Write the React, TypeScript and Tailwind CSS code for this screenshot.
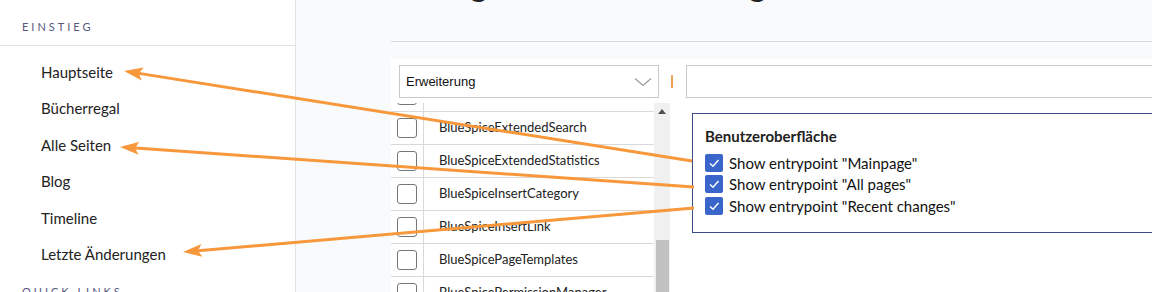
import React from 'react';

const navItems = ['Hauptseite', 'Bücherregal', 'Alle Seiten', 'Blog', 'Timeline', 'Letzte Änderungen'];

const rows = [
  'BlueSpiceExpiry',
  'BlueSpiceExtendedSearch',
  'BlueSpiceExtendedStatistics',
  'BlueSpiceInsertCategory',
  'BlueSpiceInsertLink',
  'BlueSpicePageTemplates',
  'BlueSpicePermissionManager',
];

const options = ['Show entrypoint "Mainpage"', 'Show entrypoint "All pages"', 'Show entrypoint "Recent changes"'];

// tail -> tip
const arrows = [
  { x1: 692, y1: 161, x2: 124, y2: 71 },
  { x1: 694, y1: 187, x2: 120, y2: 147 },
  { x1: 694, y1: 208, x2: 183, y2: 252 },
];

function Arrow({ x1, y1, x2, y2 }: { x1: number; y1: number; x2: number; y2: number }) {
  const dx = x2 - x1;
  const dy = y2 - y1;
  const len = Math.hypot(dx, dy);
  const ux = dx / len;
  const uy = dy / len;
  const head = 19;
  const half = 6.5;
  const bx = x2 - ux * head;
  const by = y2 - uy * head;
  const pts = `${x2},${y2} ${bx - uy * half},${by + ux * half} ${x2 - ux * (head - 4)},${y2 - uy * (head - 4)} ${bx + uy * half},${by - ux * half}`;
  return (
    <g>
      <line x1={x1} y1={y1} x2={x2 - ux * 12} y2={y2 - uy * 12} stroke="#f7983c" strokeWidth={3} />
      <polygon points={pts} fill="#f7983c" />
    </g>
  );
}

export default function App() {
  return (
    <div className="relative flex h-[292px] w-[1152px] overflow-hidden bg-white font-['Lato','Noto_Sans',sans-serif]">
      {/* sidebar */}
      <div className="w-[296px] shrink-0 border-r border-[#e3e3e3] bg-white">
        <div className="border-b border-[#e0e0e0] pb-[10px] pl-[22px] pt-[19px]">
          <div className="text-[11px] leading-[16px] tracking-[3px] text-[#56587e]">EINSTIEG</div>
        </div>
        <div className="mt-[8px] pl-[41px]">
          {navItems.map(n => (
            <div key={n} className="flex h-[36.4px] items-center text-[15px] text-[#222]">{n}</div>
          ))}
        </div>
        <div className="mt-[12px] pl-[22px] text-[11px] leading-[16px] tracking-[3px] text-[#56587e]">QUICK LINKS</div>
      </div>

      {/* main */}
      <div className="flex min-w-0 flex-1 flex-col bg-[#f9fafc] pl-[95px]">
        <div className="h-[42px] shrink-0 overflow-hidden border-b border-[#d9d9d9]">
          <h1 className="mt-[-37px] whitespace-nowrap text-[34px] font-normal leading-[40px] text-[#222]">Konfiguration Einstellungen</h1>
        </div>
        <div className="h-[17px] shrink-0" />
        <div className="flex min-h-0 flex-1 flex-col bg-white">
          <div className="flex items-center pt-[6px]">
            <div className="ml-[8px] flex h-[33px] w-[260px] items-center justify-between border border-[#c8c8c8] pl-[6px] pr-[6px] font-['Liberation_Sans',Arial,sans-serif] text-[13px] text-[#111]">
              <span>Erweiterung</span>
              <svg width="18" height="10" viewBox="0 0 18 10" fill="none" stroke="#9a9a9a" strokeWidth="1.2">
                <path d="M1 1.5 L9 8.5 L17 1.5" />
              </svg>
            </div>
            <div className="ml-[12px] h-[13px] w-[2px] bg-[#eea25a]" />
            <div className="ml-[13px] h-[33px] flex-1 border border-r-0 border-[#c8c8c8]" />
          </div>
          <div className="mt-[5px] flex min-h-0 flex-1">
            <div className="flex w-[279px] shrink-0 overflow-hidden">
              <div className="w-[263px] overflow-hidden">
                <div className="mt-[-25px]">
                  {rows.map(r => (
                    <div key={r} className="flex h-[33px] border-t border-[#d9d9d9]">
                      <div className="flex w-[33px] items-center border-r border-[#d9d9d9] pl-[6px]">
                        <div className="h-[20px] w-[20px] rounded-[3px] border border-[#777] bg-white" />
                      </div>
                      <div className="flex items-center pl-[15px] text-[13px] text-[#222]">{r}</div>
                    </div>
                  ))}
                </div>
              </div>
              <div className="w-[16px] bg-[#f0f0f0]">
                <div className="flex h-[17px] items-center justify-center">
                  <svg width="8" height="5" viewBox="0 0 8 5">
                    <path d="M0 5 L4 0 L8 5 Z" fill="#505050" />
                  </svg>
                </div>
                <div className="mx-auto mt-[120px] h-[80px] w-[13px] bg-[#c1c1c1]" />
              </div>
            </div>
            <div className="ml-[22px] mt-[10px] flex-1 self-start border border-r-0 border-[#3d4d8a] pb-[15px] pl-[12px] pt-[12px]">
              <div className="text-[15px] font-bold leading-[21px] text-[#222]">Benutzeroberfläche</div>
              <div className="mt-[5px]">
                {options.map(o => (
                  <div key={o} className="flex h-[21.5px] items-center gap-[6px]">
                    <div className="flex h-[18px] w-[18px] items-center justify-center rounded-[2px] bg-[#3a66cc]">
                      <svg width="18" height="18" viewBox="0 0 18 18" fill="none" stroke="white" strokeWidth="1.4">
                        <path d="M5 9.5 L8 12.3 L13.5 6" />
                      </svg>
                    </div>
                    <span className="whitespace-nowrap text-[15px] text-[#111]">{o}</span>
                  </div>
                ))}
              </div>
            </div>
          </div>
        </div>
      </div>

      <svg className="pointer-events-none absolute inset-0" width="1152" height="292">
        {arrows.map((a, i) => (
          <Arrow key={i} {...a} />
        ))}
      </svg>
    </div>
  );
}
